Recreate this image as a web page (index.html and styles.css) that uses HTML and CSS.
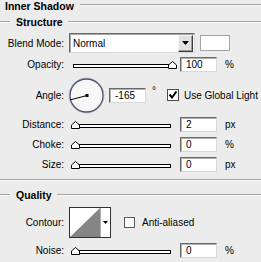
FILE: index.html
```html
<!DOCTYPE html>
<html>
<head>
<meta charset="utf-8">
<link rel="stylesheet" href="styles.css">
</head>
<body>
<div class="panel">
  <div class="title-row"><span class="title">Inner Shadow</span><span class="rule"></span></div>

  <div class="group-head"><span class="lead"></span><span class="gtitle">Structure</span><span class="rule"></span></div>

  <div class="row row-blend">
    <span class="label">Blend Mode:</span>
    <div class="select">
      <span class="sel-text">Normal</span>
      <span class="sel-btn"><svg width="7" height="4" viewBox="0 0 7 4"><polygon points="0,0 7,0 3.5,4" fill="#000"/></svg></span>
    </div>
    <div class="swatch"></div>
  </div>

  <div class="row row-field">
    <span class="label">Opacity:</span>
    <div class="slider"><div class="track"></div><svg class="thumb" style="left:99px" width="9" height="8" viewBox="0 0 9 8"><polygon points="0.5,7.5 0.5,4 4.5,0.5 8.5,4 8.5,7.5" fill="#fff" stroke="#000"/></svg></div>
    <div class="field">100</div><span class="unit">%</span>
  </div>

  <div class="row row-angle">
    <span class="label">Angle:</span>
    <svg class="dial" width="37" height="37" viewBox="0 0 37 37">
      <circle cx="18.5" cy="18.5" r="17.5" fill="none" stroke="#c9cbd6" stroke-width="1"/>
      <circle cx="18.5" cy="18.5" r="16.5" fill="#f7f7f7" stroke="#4e5470" stroke-width="1.3"/>
      <line x1="19" y1="18.5" x2="2.5" y2="22.8" stroke="#000" stroke-width="1"/>
      <rect x="17.5" y="17" width="3" height="3" fill="#000"/>
    </svg>
    <div class="field">-165</div>
    <span class="deg">°</span>
    <span class="check checked"><svg width="10" height="10" viewBox="0 0 10 10"><polyline points="1.5,4.5 4,7.5 8.5,1.5" fill="none" stroke="#000" stroke-width="2"/></svg></span>
    <span class="check-label">Use Global Light</span>
  </div>

  <div class="row row-field row-distance">
    <span class="label">Distance:</span>
    <div class="slider"><div class="track"></div><svg class="thumb" style="left:2px" width="9" height="8" viewBox="0 0 9 8"><polygon points="0.5,7.5 0.5,4 4.5,0.5 8.5,4 8.5,7.5" fill="#fff" stroke="#000"/></svg></div>
    <div class="field">2</div><span class="unit">px</span>
  </div>

  <div class="row row-field row-next">
    <span class="label">Choke:</span>
    <div class="slider"><div class="track"></div><svg class="thumb" style="left:2px" width="9" height="8" viewBox="0 0 9 8"><polygon points="0.5,7.5 0.5,4 4.5,0.5 8.5,4 8.5,7.5" fill="#fff" stroke="#000"/></svg></div>
    <div class="field">0</div><span class="unit">%</span>
  </div>

  <div class="row row-field row-next">
    <span class="label">Size:</span>
    <div class="slider"><div class="track"></div><svg class="thumb" style="left:2px" width="9" height="8" viewBox="0 0 9 8"><polygon points="0.5,7.5 0.5,4 4.5,0.5 8.5,4 8.5,7.5" fill="#fff" stroke="#000"/></svg></div>
    <div class="field">0</div><span class="unit">px</span>
  </div>

  <div class="separator"></div>

  <div class="group-head group-quality"><span class="lead"></span><span class="gtitle">Quality</span><span class="rule"></span></div>

  <div class="row row-contour">
    <span class="label">Contour:</span>
    <div class="contour">
      <svg class="curve" width="30" height="29" viewBox="0 0 30 29">
        <rect width="30" height="29" fill="#fff"/>
        <polygon points="0,29 30,0 30,29" fill="#858585"/>
      </svg>
      <span class="contour-btn"><svg width="5" height="3" viewBox="0 0 5 3"><polygon points="0,0 5,0 2.5,3" fill="#000"/></svg></span>
    </div>
    <span class="check check-aa"></span>
    <span class="check-label aa-label">Anti-aliased</span>
  </div>

  <div class="row row-field row-noise">
    <span class="label">Noise:</span>
    <div class="slider"><div class="track"></div><svg class="thumb" style="left:2px" width="9" height="8" viewBox="0 0 9 8"><polygon points="0.5,7.5 0.5,4 4.5,0.5 8.5,4 8.5,7.5" fill="#fff" stroke="#000"/></svg></div>
    <div class="field">0</div><span class="unit">%</span>
  </div>
</div>
</body>
</html>
```

FILE: styles.css
```css
html, body {
  margin: 0;
  padding: 0;
  background: #ececec;
}
body {
  width: 261px;
  height: 262px;
  overflow: hidden;
  font-family: "Liberation Sans", Arial, sans-serif;
  font-size: 10px;
  color: #000;
}
.panel {
  display: flex;
  flex-direction: column;
}
.title-row {
  display: flex;
  align-items: center;
  height: 12px;
}
.title {
  font-weight: bold;
  font-size: 10.5px;
  margin-left: 5px;
  line-height: 12px;
}
.rule {
  flex: 1;
  height: 0;
  border-top: 1px solid #a2a2a2;
  border-bottom: 1px solid #fbfbfb;
}
.title-row .rule {
  margin-left: 6px;
  margin-top: -2px;
}
.group-head {
  display: flex;
  align-items: center;
  height: 12px;
  margin-top: 4px;
}
.group-head .lead {
  width: 10px;
  height: 0;
  border-top: 1px solid #a2a2a2;
  border-bottom: 1px solid #fbfbfb;
}
.gtitle {
  font-weight: bold;
  font-size: 10.5px;
  margin-left: 6px;
  margin-right: 5px;
  line-height: 12px;
}
.row {
  display: flex;
  align-items: center;
}
.label {
  width: 64px;
  flex: none;
  text-align: right;
  white-space: nowrap;
}
.row-blend {
  height: 20px;
  margin-top: 5px;
}
.select {
  margin-left: 5px;
  width: 126px;
  height: 20px;
  box-sizing: border-box;
  border: 1px solid;
  border-color: #6a6a6a #dadada #dadada #6a6a6a;
  box-shadow: inset 1px 1px 0 #a8a8a8;
  background: #fff;
  display: flex;
  align-items: center;
}
.sel-text {
  flex: 1;
  padding-left: 3px;
  padding-top: 1px;
}
.sel-btn {
  width: 15px;
  height: 17px;
  margin-right: 1px;
  box-sizing: border-box;
  border: 1px solid;
  border-color: #f4f4f4 #3c3c3c #3c3c3c #f4f4f4;
  box-shadow: inset -1px -1px 0 #9a9a9a;
  background: #e2e2e2;
  display: flex;
  align-items: center;
  justify-content: center;
}
.swatch {
  margin-left: 5px;
  width: 30px;
  height: 16px;
  box-sizing: border-box;
  border: 1px solid #a4a4a4;
  background: #fff;
}
.row-field {
  height: 15px;
  margin-top: 4px;
}
.row-next {
  margin-top: 5px;
}
.slider {
  position: relative;
  margin-left: 5px;
  width: 108px;
  height: 15px;
  flex: none;
}
.track {
  margin-left: 4px;
  margin-top: 7px;
  width: 98px;
  height: 4px;
  box-sizing: border-box;
  border: 1px solid #000;
  border-bottom-width: 1.5px;
  background: #fff;
}
.thumb {
  position: absolute;
  top: 4px;
}
.field {
  margin-left: 3px;
  width: 37px;
  height: 15px;
  flex: none;
  box-sizing: border-box;
  border: 1px solid;
  border-color: #6a6a6a #d8d8d8 #d8d8d8 #6a6a6a;
  box-shadow: inset 1px 1px 0 #b0b0b0;
  background: #fff;
  padding-left: 5px;
  line-height: 13px;
}
.unit {
  margin-left: 8px;
}
.row-angle {
  height: 36px;
  margin-top: 5px;
}
.dial {
  margin-left: 4px;
  flex: none;
}
.row-angle .field {
  margin-left: 4px;
}
.deg {
  margin-left: 6px;
  align-self: flex-start;
  margin-top: 8px;
}
.check {
  width: 12px;
  height: 12px;
  box-sizing: border-box;
  border: 1px solid #4a4a4a;
  background: #fff;
  flex: none;
  display: flex;
  align-items: center;
  justify-content: center;
}
.checked {
  margin-left: 11px;
}
.check-label {
  margin-left: 5px;
  white-space: nowrap;
}
.row-distance {
  margin-top: 4px;
}
.separator {
  margin-top: 7px;
  height: 0;
  border-top: 1px solid #a2a2a2;
  border-bottom: 1px solid #fbfbfb;
}
.group-quality {
  margin-top: 8px;
}
.row-contour {
  height: 31px;
  margin-top: 6px;
}
.contour {
  margin-left: 5px;
  width: 42px;
  height: 31px;
  box-sizing: border-box;
  border: 1px solid #303030;
  background: #fff;
  display: flex;
}
.curve {
  display: block;
  flex: none;
}
.contour-btn {
  flex: 1;
  border-left: 1px solid #b0b0b0;
  display: flex;
  align-items: center;
  justify-content: center;
  padding-bottom: 1px;
}
.check-aa {
  margin-left: 13px;
  width: 11px;
  height: 11px;
  border-color: #5a5a5a;
}
.aa-label {
  margin-left: 7px;
}
.row-noise {
  margin-top: 5px;
}
```
